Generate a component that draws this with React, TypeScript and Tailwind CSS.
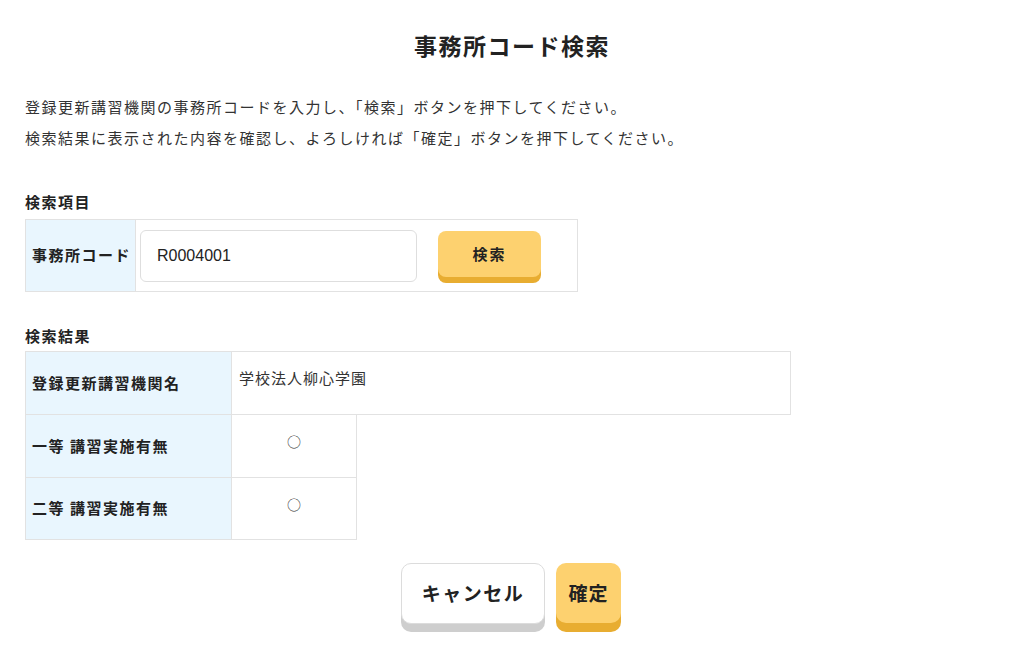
import { useState } from 'react'

const font = { fontFamily: '"Noto Sans CJK JP", "Noto Sans", sans-serif' }

function LabelCell({ children, className = '' }: { children: string; className?: string }) {
  return (
    <div
      className={`flex items-center bg-[#e9f6fe] pl-[6px] text-[15px] font-bold tracking-[1.5px] text-[#222] ${className}`}
    >
      {children}
    </div>
  )
}

export default function App() {
  const [code, setCode] = useState('R0004001')
  const rows = [
    { label: '一等 講習実施有無', value: '○' },
    { label: '二等 講習実施有無', value: '○' },
  ]
  return (
    <div className="min-h-[664px] bg-white px-[25px] text-[#333]" style={font}>
      <h1 className="pt-[29px] text-center text-[23px] font-bold leading-8 tracking-[1.5px] text-[#222]">
        事務所コード検索
      </h1>

      <div className="mt-[30px] text-[15px] leading-[31px] tracking-[1.5px]">
        <p>登録更新講習機関の事務所コードを入力し、「検索」ボタンを押下してください。</p>
        <p>検索結果に表示された内容を確認し、よろしければ「確定」ボタンを押下してください。</p>
      </div>

      <p className="mt-[39px] text-[15px] font-bold leading-5 tracking-[1.5px] text-[#222]">検索項目</p>
      <div className="mt-[7px] flex h-[73px] w-[553px] border border-[#e2e2e2]">
        <LabelCell className="w-[110px] border-r border-[#e2e2e2]">事務所コード</LabelCell>
        <div className="flex items-start gap-[21px] pt-[10px] pl-[4px]">
          <input
            value={code}
            onChange={(e) => setCode(e.target.value)}
            className="h-[52px] w-[277px] rounded-[6px] border border-[#dedede] pl-4 text-[16px] text-[#222] outline-none"
            style={{ fontFamily: '"Liberation Sans", Arial, sans-serif' }}
          />
          <button
            type="button"
            className="mt-[1px] h-[46px] w-[103px] rounded-[8px] bg-[#fdd16f] text-[15px] font-bold tracking-[2px] text-[#222] shadow-[0_6px_0_#e8ad31]"
          >
            検索
          </button>
        </div>
      </div>

      <p className="mt-[34px] text-[15px] font-bold leading-5 tracking-[1.5px] text-[#222]">検索結果</p>
      <div className="mt-[5px] w-[766px] border border-[#e2e2e2]">
        <div className="flex h-[62px]">
          <LabelCell className="w-[206px] border-r border-[#e2e2e2]">登録更新講習機関名</LabelCell>
          <div className="pt-[14px] pl-[7px] text-[15px] leading-6 tracking-[1px] text-[#333]">学校法人柳心学園</div>
        </div>
      </div>
      <div className="w-[332px] border-x border-b border-[#e2e2e2]">
        {rows.map((r, i) => (
          <div key={r.label} className={`flex h-[62px] ${i > 0 ? 'border-t border-[#e2e2e2]' : ''}`}>
            <LabelCell className="w-[206px] border-r border-[#e2e2e2]">{r.label}</LabelCell>
            <div className="flex-1 pt-[14px] text-center text-[14px] leading-6 text-[#333]">{r.value}</div>
          </div>
        ))}
      </div>

      <div className="mt-[23px] flex justify-center gap-[11px] pr-[2px]">
        <button
          type="button"
          className="h-[61px] w-[144px] rounded-[10px] border border-[#dcdcdc] bg-white text-[19px] font-bold tracking-[1.5px] text-[#222] shadow-[0_8px_0_#cecece]"
        >
          キャンセル
        </button>
        <button
          type="button"
          className="h-[60px] w-[65px] rounded-[10px] bg-[#fdd16f] text-[19px] font-bold tracking-[1px] text-[#222] shadow-[0_9px_0_#e8ad31]"
        >
          確定
        </button>
      </div>
    </div>
  )
}
